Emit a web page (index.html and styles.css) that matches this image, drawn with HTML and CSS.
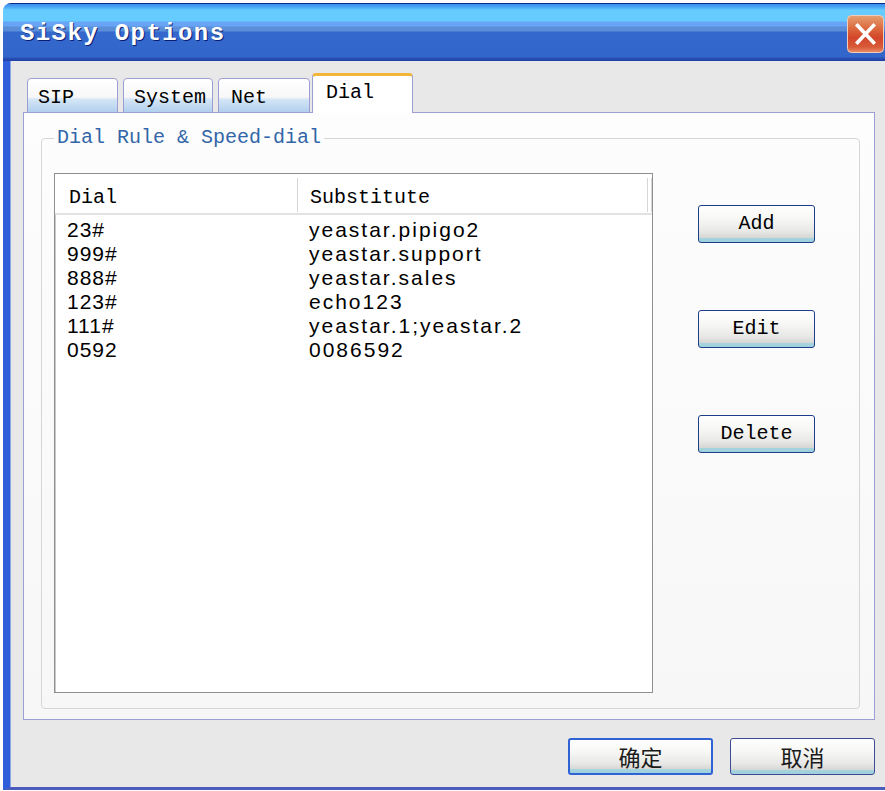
FILE: index.html
```html
<!DOCTYPE html>
<html lang="en">
<head>
<meta charset="utf-8">
<title>SiSky Options</title>
<link rel="stylesheet" href="styles.css">
</head>
<body>
<div class="window">
  <div class="titlebar">
    <span class="title">SiSky Options</span>
    <button class="close" aria-label="Close">
      <svg width="37" height="38" viewBox="0 0 37 38">
        <defs>
          <linearGradient id="closeFill" x1="0" y1="0" x2="0" y2="1">
            <stop offset="0" stop-color="#e6a072"/>
            <stop offset="0.35" stop-color="#dc6a3e"/>
            <stop offset="0.6" stop-color="#d2462a"/>
            <stop offset="0.85" stop-color="#d85a38"/>
            <stop offset="1" stop-color="#eb8e6a"/>
          </linearGradient>
        </defs>
        <rect x="0.5" y="0.5" width="36" height="37" rx="4" fill="url(#closeFill)" stroke="#f2cdb8"/>
        <path d="M10.5 10.5 L26.5 27.5 M26.5 10.5 L10.5 27.5" stroke="#ffffff" stroke-width="3.6" stroke-linecap="square"/>
      </svg>
    </button>
  </div>

  <div class="client">
    <div class="tabs">
      <div class="tab tab-sip">SIP</div>
      <div class="tab tab-system">System</div>
      <div class="tab tab-net">Net</div>
      <div class="tab tab-dial active">Dial</div>
    </div>

    <div class="panel">
      <fieldset class="group">
        <legend>Dial Rule &amp; Speed-dial</legend>
        <div class="group-body">
          <div class="list">
            <div class="list-head">
              <div class="hcol hcol-dial">Dial</div>
              <div class="hcol hcol-sub">Substitute</div>
              <div class="hcol hcol-end"></div>
            </div>
            <div class="list-body">
              <div class="row"><span class="c1">23#</span><span class="c2">yeastar.pipigo2</span></div>
              <div class="row"><span class="c1">999#</span><span class="c2">yeastar.support</span></div>
              <div class="row"><span class="c1">888#</span><span class="c2">yeastar.sales</span></div>
              <div class="row"><span class="c1">123#</span><span class="c2">echo123</span></div>
              <div class="row"><span class="c1">111#</span><span class="c2">yeastar.1;yeastar.2</span></div>
              <div class="row"><span class="c1">0592</span><span class="c2">0086592</span></div>
            </div>
          </div>
          <div class="actions">
            <button class="btn">Add</button>
            <button class="btn">Edit</button>
            <button class="btn">Delete</button>
          </div>
        </div>
      </fieldset>
    </div>

    <div class="footer">
      <button class="btn btn-cjk btn-default">确定</button>
      <button class="btn btn-cjk">取消</button>
    </div>
  </div>
</div>
</body>
</html>
```

FILE: styles.css
```css
html, body {
  margin: 0;
  padding: 0;
  background: #ffffff;
}

body {
  font-family: "Liberation Mono", monospace;
  color: #000;
}

.window {
  margin: 3px 0 0 3px;
  width: 882px;
  height: 787px;
  display: flex;
  flex-direction: column;
  border-top-left-radius: 8px;
  overflow: hidden;
}

/* XP style caption */
.titlebar {
  flex: none;
  height: 58px;
  display: flex;
  align-items: center;
  justify-content: space-between;
  padding: 3px 1px 0 17px;
  box-sizing: border-box;
  background: linear-gradient(
    #0c2c8c 0px, #0c2c8c 1px,
    #3c8cec 1px, #4aa6f4 4px,
    #66ccff 7px, #66ccff 18px,
    #68a4f6 19px, #68a4f6 23px,
    #5a8ed8 24px, #5a8ed8 28px,
    #3468cc 29px, #3266ca 54px,
    #2a52b8 55px, #1e3ea4 58px);
}

.title {
  font-family: "Liberation Mono", monospace;
  font-weight: bold;
  font-size: 24px;
  letter-spacing: 1.4px;
  color: #ffffff;
  text-shadow: 1px 1px 0 #0b1d70;
}

.close {
  width: 37px;
  height: 38px;
  padding: 0;
  margin: 0;
  border: 0;
  background: none;
  display: block;
}

.close svg {
  display: block;
}

.client {
  flex: 1;
  display: flex;
  flex-direction: column;
  background: #e8e8e8;
  border-left: 7px solid #2f60da;
  border-bottom: 3px solid #4c5cbc;
  box-shadow: inset 1px 0 0 #8ea6e6;
  padding: 12px 10px 0 13px;
  min-height: 0;
}

/* Tab strip */
.tabs {
  display: flex;
  align-items: flex-end;
  padding-left: 4px;
  margin-bottom: -1px;
  position: relative;
  z-index: 1;
}

.tab {
  box-sizing: border-box;
  height: 35px;
  padding: 9px 0 0 10px;
  font-size: 20px;
  line-height: 20px;
  border: 1px solid #9d9fd2;
  border-radius: 4px 4px 0 0;
  background: linear-gradient(#ffffff 0%, #f7f7f7 55%, #d4e6f6 62%, #b2cfee 100%);
  margin-right: 5px;
}

.tab-sip { width: 91px; }
.tab-system { width: 90px; }
.tab-net { width: 92px; padding-left: 12px; margin-right: 2px; }

.tab.active {
  width: 101px;
  height: 40px;
  padding: 7px 0 0 13px;
  border-top: 3px solid #f3b43a;
  border-bottom: none;
  background: #ffffff;
  margin-right: 0;
}

/* Tab page */
.panel {
  flex: none;
  height: 608px;
  box-sizing: border-box;
  border: 1px solid #9d9fd2;
  background: linear-gradient(#fdfdfd, #f7f7f7);
  padding: 14px 14px 11px 17px;
  display: flex;
  flex-direction: column;
}

.group {
  flex: 1;
  margin: 0;
  min-width: 0;
  border: 1px solid #d6d6d2;
  border-radius: 4px;
  padding: 0 12px 15px 12px;
  display: flex;
  flex-direction: column;
}

.group legend {
  font-size: 20px;
  line-height: 22px;
  color: #3366a8;
  padding: 0 3px;
}

.group-body {
  flex: 1;
  display: flex;
  align-items: flex-start;
  padding-top: 24px;
}

/* List view */
.list {
  box-sizing: border-box;
  width: 599px;
  height: 520px;
  border: 1px solid #8f8f8f;
  box-shadow: inset 1px 1px 0 #c9c9c9;
  background: #ffffff;
  flex: none;
}

.list-head {
  display: flex;
  height: 41px;
  box-sizing: border-box;
  padding-top: 4px;
  border-bottom: 2px solid #e2e2e2;
  background: #ffffff;
}

.hcol {
  box-sizing: border-box;
  height: 34px;
  padding-top: 10px;
  font-size: 20px;
  line-height: 20px;
  border-right: 1px solid #d6d6d6;
}

.hcol-dial { width: 242px; padding-left: 13px; margin-left: 1px; }
.hcol-sub { width: 350px; padding-left: 12px; }
.hcol-end { width: 4px; }

.list-body {
  padding-top: 3px;
  font-family: "Liberation Sans", Arial, sans-serif;
  font-size: 21px;
  letter-spacing: 2px;
}

.row {
  display: flex;
  height: 24px;
  line-height: 24px;
}

.c1 {
  width: 242px;
  box-sizing: border-box;
  padding-left: 12px;
  letter-spacing: 1px;
}

.c2 {
  padding-left: 12px;
}

/* Buttons */
.actions {
  display: flex;
  flex-direction: column;
  gap: 67px;
  margin-left: 45px;
  padding-top: 32px;
}

.btn {
  box-sizing: border-box;
  width: 117px;
  height: 38px;
  margin: 0;
  padding: 0 0 2px;
  font-family: "Liberation Mono", monospace;
  font-size: 20px;
  color: #000;
  border: 1px solid #1d3f8a;
  border-radius: 3px;
  background: linear-gradient(#ffffff 0%, #f7f7f5 35%, #e8e8e6 70%, #d6d6d4 88%, #a6d4de 89%, #9ccfdc 100%);
  box-shadow: inset 0 1px 0 #ffffff;
}

.footer {
  display: flex;
  justify-content: flex-end;
  gap: 17px;
  margin-top: 18px;
}

.btn-cjk {
  width: 145px;
  height: 37px;
  font-family: "Noto Sans CJK SC", "Noto Sans", sans-serif;
  font-size: 22px;
  line-height: 1;
  color: #1a1a1a;
  border-color: #3c4c94;
}

.btn-default {
  border: 2px solid #2f62d4;
}
```
